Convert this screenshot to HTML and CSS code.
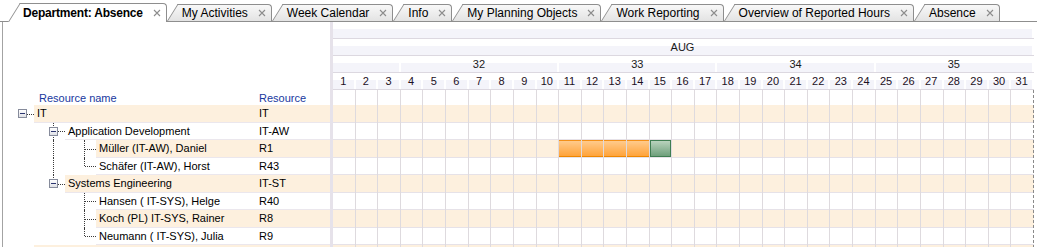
FILE: index.html
```html
<!DOCTYPE html>
<html lang="en">
<head>
    <meta charset="UTF-8">
    <title>Department: Absence</title>
    <link rel="stylesheet" href="styles.css">
</head>
<body>

    <!-- Tab strip -->
    <div class="tabstrip">
        <div class="tab active"><span>Department: Absence</span><svg class="x" viewBox="0 0 8 8"><path d="M1 1L7 7M7 1L1 7"/></svg></div>
        <div class="tab"><span>My Activities</span><svg class="x" viewBox="0 0 8 8"><path d="M1 1L7 7M7 1L1 7"/></svg></div>
        <div class="tab"><span>Week Calendar</span><svg class="x" viewBox="0 0 8 8"><path d="M1 1L7 7M7 1L1 7"/></svg></div>
        <div class="tab"><span>Info</span><svg class="x" viewBox="0 0 8 8"><path d="M1 1L7 7M7 1L1 7"/></svg></div>
        <div class="tab"><span>My Planning Objects</span><svg class="x" viewBox="0 0 8 8"><path d="M1 1L7 7M7 1L1 7"/></svg></div>
        <div class="tab"><span>Work Reporting</span><svg class="x" viewBox="0 0 8 8"><path d="M1 1L7 7M7 1L1 7"/></svg></div>
        <div class="tab"><span>Overview of Reported Hours</span><svg class="x" viewBox="0 0 8 8"><path d="M1 1L7 7M7 1L1 7"/></svg></div>
        <div class="tab"><span>Absence</span><svg class="x" viewBox="0 0 8 8"><path d="M1 1L7 7M7 1L1 7"/></svg></div>
    </div>

    <div class="workspace">

        <!-- Resource tree -->
        <div class="tree">
            <div class="tree-top"></div>
            <div class="tree-head">
                <span class="name">Resource name</span>
                <span class="res">Resource</span>
            </div>

            <div class="node-row alt">
                <span class="slot node"><span class="toggle"></span></span>
                <span class="cells"><span class="name">IT</span><span class="res">IT</span></span>
            </div>
            <div class="node-row">
                <span class="slot"></span><span class="slot tee node"><span class="toggle"></span></span>
                <span class="cells"><span class="name">Application Development</span><span class="res">IT-AW</span></span>
            </div>
            <div class="node-row alt">
                <span class="slot"></span><span class="slot pipe"></span><span class="slot tee"></span>
                <span class="cells"><span class="name">Müller (IT-AW), Daniel</span><span class="res">R1</span></span>
            </div>
            <div class="node-row">
                <span class="slot"></span><span class="slot pipe"></span><span class="slot elbow"></span>
                <span class="cells"><span class="name">Schäfer (IT-AW), Horst</span><span class="res">R43</span></span>
            </div>
            <div class="node-row alt">
                <span class="slot"></span><span class="slot elbow node"><span class="toggle"></span></span>
                <span class="cells"><span class="name">Systems Engineering</span><span class="res">IT-ST</span></span>
            </div>
            <div class="node-row">
                <span class="slot"></span><span class="slot"></span><span class="slot tee"></span>
                <span class="cells"><span class="name">Hansen ( IT-SYS), Helge</span><span class="res">R40</span></span>
            </div>
            <div class="node-row alt">
                <span class="slot"></span><span class="slot"></span><span class="slot tee"></span>
                <span class="cells"><span class="name">Koch (PL) IT-SYS, Rainer</span><span class="res">R8</span></span>
            </div>
            <div class="node-row">
                <span class="slot"></span><span class="slot"></span><span class="slot elbow"></span>
                <span class="cells"><span class="name">Neumann ( IT-SYS), Julia</span><span class="res">R9</span></span>
            </div>
            <div class="node-row alt">
                <span class="slot"></span>
                <span class="cells"><span class="name"></span><span class="res"></span></span>
            </div>
        </div>

        <div class="splitter"></div>

        <!-- Gantt chart -->
        <div class="chart">
            <div class="scale">
                <div class="scale-row"><div class="band full"></div></div>
                <div class="scale-row"><div class="band full">AUG</div></div>
                <div class="scale-row">
                    <div class="band part-week"></div>
                    <div class="band week">32</div>
                    <div class="band week">33</div>
                    <div class="band week">34</div>
                    <div class="band week">35</div>
                </div>
                <div class="scale-row days">
                    <div class="band">1</div><div class="band">2</div><div class="band">3</div><div class="band">4</div>
                    <div class="band">5</div><div class="band">6</div><div class="band">7</div><div class="band">8</div>
                    <div class="band">9</div><div class="band">10</div><div class="band">11</div><div class="band">12</div>
                    <div class="band">13</div><div class="band">14</div><div class="band">15</div><div class="band">16</div>
                    <div class="band">17</div><div class="band">18</div><div class="band">19</div><div class="band">20</div>
                    <div class="band">21</div><div class="band">22</div><div class="band">23</div><div class="band">24</div>
                    <div class="band">25</div><div class="band">26</div><div class="band">27</div><div class="band">28</div>
                    <div class="band">29</div><div class="band">30</div><div class="band">31</div>
                </div>
            </div>

            <div class="chart-body">
                <!-- day lines over the lanes -->
                <div class="gridlines">
                    <span></span><span></span><span></span><span></span><span></span><span></span><span></span><span></span>
                    <span></span><span></span><span></span><span></span><span></span><span></span><span></span><span></span>
                    <span></span><span></span><span></span><span></span><span></span><span></span><span></span><span></span>
                    <span></span><span></span><span></span><span></span><span></span><span></span><span></span>
                </div>

                <div class="lane head"></div>
                <div class="lane alt"></div>
                <div class="lane"></div>
                <div class="lane alt">
                    <span class="lead"></span>
                    <span class="bar plan"></span>
                    <span class="bar plan"></span>
                    <span class="bar plan"></span>
                    <span class="bar plan"></span>
                    <span class="bar done"></span>
                </div>
                <div class="lane"></div>
                <div class="lane alt"></div>
                <div class="lane"></div>
                <div class="lane alt"></div>
                <div class="lane"></div>
                <div class="lane alt"></div>
            </div>
        </div>
    </div>

</body>
</html>
```

FILE: styles.css
```css
body {
    margin: 0;
    font-family: "Liberation Sans", Arial, sans-serif;
    background: #fff;
    overflow: hidden;
}

/* Tab strip */
.tabstrip {
    display: flex;
    align-items: flex-end;
    height: 21px;
    padding-left: 8px;
    border-bottom: 1px solid #8e8e8e;
}

.tab {
    position: relative;
    z-index: 0;
    display: flex;
    align-items: center;
    height: 17px;
    padding: 0 6px 0 15px;
    font-size: 12px;
    color: #000;
    white-space: nowrap;
}

.tab::before,
.tab::after {
    content: "";
    position: absolute;
    z-index: -1;
    top: 0;
    bottom: 0;
    background: linear-gradient(#f8f8f8, #e3e3e3);
    border-top: 1px solid #8e8e8e;
}

/* slanted left edge */
.tab::before {
    left: 0;
    width: 20px;
    border-left: 1px solid #8e8e8e;
    transform: skewX(-32deg);
    transform-origin: 0 100%;
}

.tab::after {
    left: 12px;
    right: 0;
    border-right: 1px solid #8e8e8e;
    border-top-right-radius: 4px;
}

.tab.active {
    z-index: 1;
    height: 19px;
    margin-bottom: -1px;
    font-weight: bold;
    letter-spacing: -0.2px;
}

.tab.active::before,
.tab.active::after {
    background: #fff;
}

.tab .x {
    width: 8px;
    height: 8px;
    margin-left: 10px;
    fill: none;
    stroke: #8c8c8c;
    stroke-width: 1.1;
}

/* Main area */
.workspace {
    display: flex;
    height: 225px;
    overflow: hidden;
    margin-left: 2px;
    border-left: 1px solid #a3a3a3;
}

.splitter {
    width: 3px;
    flex: none;
    background: #e6e2ea;
}

/* Resource tree */
.tree {
    width: 327px;
    flex: none;
    font-size: 11px;
    color: #000;
}

.tree-top {
    height: 68px;
}

.tree-head {
    display: flex;
    align-items: center;
    height: 15px;
    color: #1838a0;
}

.tree-head .name {
    padding-left: 36px;
}

.tree-head .res {
    padding-left: 3px;
}

.node-row {
    display: flex;
    height: 17.5px;
}

.cells {
    flex: 1;
    display: flex;
    align-items: center;
    border-bottom: 1px solid #ebe7ed;
}

.node-row.alt .cells {
    background: #fdf0de;
}

.name {
    flex: 1;
    padding-left: 3px;
    white-space: nowrap;
}

.res {
    width: 71px;
    flex: none;
    padding-left: 2px;
}

.slot {
    position: relative;
    display: flex;
    align-items: center;
    width: 31px;
    flex: none;
}

.pipe::before,
.tee::before,
.elbow::before,
.tee::after,
.elbow::after,
.node::after {
    content: "";
    position: absolute;
}

.pipe::before,
.tee::before {
    left: 19px;
    top: 0;
    bottom: 0;
    border-left: 1px dotted #3a3a3a;
}

.elbow::before {
    left: 19px;
    top: 0;
    height: 50%;
    border-left: 1px dotted #3a3a3a;
}

.tee::after,
.elbow::after {
    left: 20px;
    right: 0;
    top: 50%;
    border-top: 1px dotted #3a3a3a;
}

.node::after {
    left: 24px;
    right: 0;
    top: 50%;
    border-top: 1px dotted #3a3a3a;
}

.toggle {
    position: relative;
    z-index: 1;
    width: 9px;
    height: 9px;
    margin-left: 15px;
    box-sizing: border-box;
    border: 1px solid #868b9b;
    background: linear-gradient(#fff, #dfe0e6);
}

.toggle::after {
    content: "";
    position: absolute;
    left: 1px;
    top: 3px;
    width: 5px;
    height: 1px;
    background: #2b3570;
}

/* Gantt chart */
.chart {
    flex: 1;
    padding-right: 3px;
    font-size: 11px;
    color: #1a1a1a;
}

.scale-row {
    display: grid;
    grid-template-columns: repeat(31, 1fr);
    height: 17px;
    box-sizing: border-box;
    border-bottom: 1px solid #dcd8e0;
}

.band {
    display: flex;
    align-items: center;
    justify-content: center;
    border-right: 2px solid #fff;
    background: linear-gradient(#fff 0, #fff 42%, #f4f4fa 42%);
}

.band.full {
    grid-column: 1 / -1;
}

.band.part-week {
    grid-column: span 3;
}

.band.week {
    grid-column: span 7;
}

.days .band {
    color: #1c0f24;
}

.chart-body {
    position: relative;
}

.gridlines {
    position: absolute;
    top: 0;
    left: 0;
    right: 0;
    bottom: 0;
    z-index: 1;
    display: grid;
    grid-template-columns: repeat(31, 1fr);
}

.gridlines span {
    border-right: 1px solid #dedade;
}

.gridlines span:last-child {
    border-right: 1px dashed #8a8a8a;
}

.lane {
    display: grid;
    grid-template-columns: repeat(31, 1fr);
    height: 17.5px;
    box-sizing: border-box;
    border-bottom: 1px solid #e6e2e8;
}

.lane.head {
    height: 15px;
    border-bottom: 0;
}

.lane.alt {
    background: #fdf0de;
}

.lead {
    grid-column: 1 / 11;
}

.bar {
    position: relative;
    z-index: 2;
    margin-right: 1px;
    box-sizing: border-box;
}

.bar.plan {
    background: linear-gradient(#ffca8c, #ffa43a);
    border-top: 1px solid #f39018;
    border-bottom: 1px solid #ee8700;
}

.bar.done {
    background: linear-gradient(#b9d3bd, #6e9f7b);
    border: 1px solid #3f7d51;
}
```
